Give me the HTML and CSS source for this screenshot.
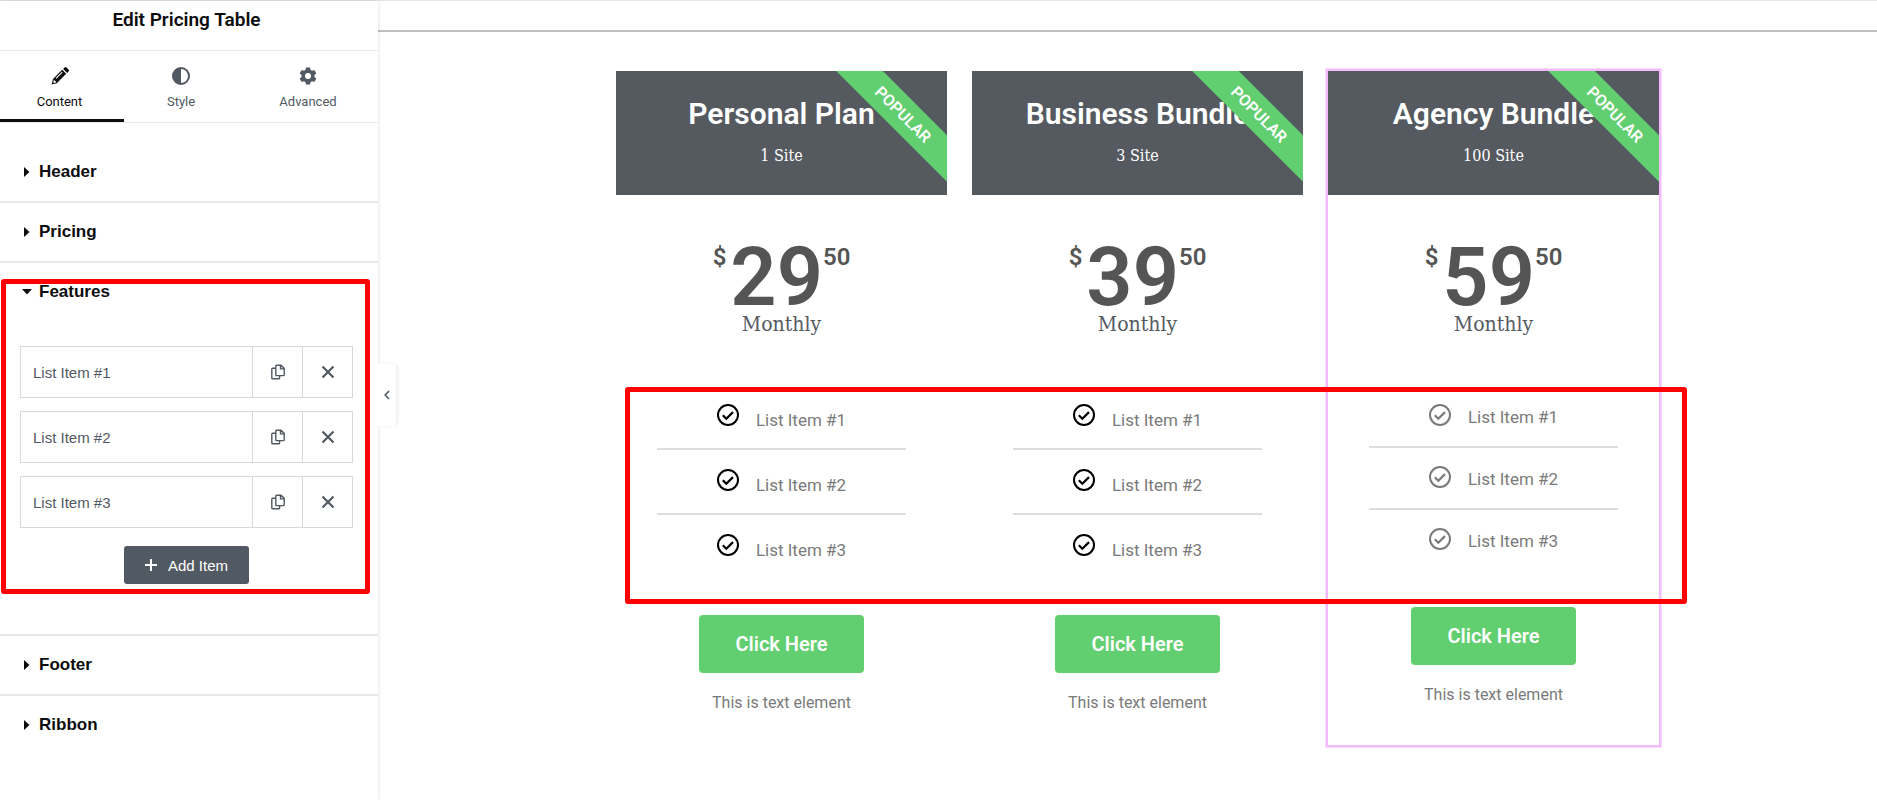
FILE: index.html
```html
<!DOCTYPE html>
<html lang="en">
<head>
<meta charset="utf-8">
<meta name="viewport" content="width=device-width, initial-scale=1">
<title>Edit Pricing Table</title>
<link rel="stylesheet" href="styles.css">
</head>
<body>
<svg class="sprite" aria-hidden="true">
  <symbol id="i-copy" viewBox="0 0 16 16"><path d="M6.600 1.200h4.400l3.200 3.200v6.400a.8.8 0 0 1-.8.8H6.600a.8.8 0 0 1-.8-.8V2a.8.8 0 0 1 .8-.8zM10.500 1.400v3.500h3.500M5.600 4.200H2.600a.8.8 0 0 0-.8.8v9a.8.8 0 0 0 .8.8h6.200a.8.8 0 0 0 .8-.8v-2.200" fill="none" stroke="currentColor" stroke-width="1.400"/></symbol>
  <symbol id="i-close" viewBox="0 0 14 14"><path d="M1.500 1.500l11 11M12.500 1.500l-11 11" fill="none" stroke="currentColor" stroke-width="2.200"/></symbol>
  <symbol id="i-check" viewBox="0 0 22 22"><circle cx="11" cy="11" r="10" fill="none" stroke="currentColor" stroke-width="2"/><path d="M5.800 11.200l3.500 3.500 6.700-6.600" fill="none" stroke="currentColor" stroke-width="2.200"/></symbol>
  <symbol id="i-caret" viewBox="0 0 6 10"><path d="M0 0l5.500 5L0 10z" fill="currentColor"/></symbol>
</svg>
<div class="editor">
  <aside class="panel">
    <h1 class="panel-title">Edit Pricing Table</h1>
    <nav class="tabs">
      <button class="tab tab-active" type="button">
        <svg class="tab-icon" viewBox="0 0 18 18" aria-hidden="true"><path fill="currentColor" fill-rule="evenodd" d="M11.200 2.800l4 4L5.800 16.200 0.600 17.600 2 12zM10.900 4.800L4.600 11.100l.7.7 6.300-6.300zM2.800 13.300l-.6 2.300.5.500 2.300-.6v-1.200H3.900v-1z"/><path fill="currentColor" d="M12.200 1.900l1.300-1.300a1.500 1.500 0 0 1 2.100 0l1.900 1.900a1.500 1.500 0 0 1 0 2.100l-1.300 1.300z"/></svg>
        <span>Content</span>
      </button>
      <button class="tab" type="button">
        <svg class="tab-icon" viewBox="0 0 18 18" aria-hidden="true"><circle cx="9" cy="9" r="8" fill="none" stroke="currentColor" stroke-width="2"/><path d="M9 1a8 8 0 0 0 0 16z" fill="currentColor"/></svg>
        <span>Style</span>
      </button>
      <button class="tab" type="button">
        <svg class="tab-icon" viewBox="0 0 18 18" aria-hidden="true"><path fill="currentColor" fill-rule="evenodd" d="M7 .4h4l.5 2.400 1.500.9 2.300-.8 2 3.400-1.800 1.700v2l1.800 1.700-2 3.400-2.300-.8-1.500.9-.5 2.400H7l-.5-2.400-1.500-.9-2.300.8-2-3.400L2.500 10V8L.7 6.300l2-3.400 2.300.8 1.500-.9zM9 6a3 3 0 1 0 0 6 3 3 0 0 0 0-6z"/></svg>
        <span>Advanced</span>
      </button>
    </nav>
    <div class="accordion">
      <section class="section"><button class="section-head" type="button" aria-expanded="false"><svg class="caret" aria-hidden="true"><use href="#i-caret"/></svg>Header</button></section>
      <section class="section"><button class="section-head" type="button" aria-expanded="false"><svg class="caret" aria-hidden="true"><use href="#i-caret"/></svg>Pricing</button></section>
      <section class="section">
        <button class="section-head" type="button" aria-expanded="true"><svg class="caret caret-open" aria-hidden="true"><use href="#i-caret"/></svg>Features</button>
        <div class="section-body">
          <ul class="repeater">
            <li class="row"><button class="row-title" type="button">List Item #1</button><button class="row-tool" type="button" aria-label="Duplicate"><svg class="copy"><use href="#i-copy"/></svg></button><button class="row-tool" type="button" aria-label="Remove"><svg class="close"><use href="#i-close"/></svg></button></li>
            <li class="row"><button class="row-title" type="button">List Item #2</button><button class="row-tool" type="button" aria-label="Duplicate"><svg class="copy"><use href="#i-copy"/></svg></button><button class="row-tool" type="button" aria-label="Remove"><svg class="close"><use href="#i-close"/></svg></button></li>
            <li class="row"><button class="row-title" type="button">List Item #3</button><button class="row-tool" type="button" aria-label="Duplicate"><svg class="copy"><use href="#i-copy"/></svg></button><button class="row-tool" type="button" aria-label="Remove"><svg class="close"><use href="#i-close"/></svg></button></li>
          </ul>
          <button class="add" type="button"><svg class="plus" viewBox="0 0 12 12" aria-hidden="true"><path d="M6 0v12M0 6h12" stroke="currentColor" stroke-width="2"/></svg>Add Item</button>
        </div>
        <div class="mark mark-panel"></div>
      </section>
      <section class="section"><button class="section-head" type="button" aria-expanded="false"><svg class="caret" aria-hidden="true"><use href="#i-caret"/></svg>Footer</button></section>
      <section class="section"><button class="section-head" type="button" aria-expanded="false"><svg class="caret" aria-hidden="true"><use href="#i-caret"/></svg>Ribbon</button></section>
    </div>
    <button class="collapse" type="button" aria-label="Hide panel"><svg viewBox="0 0 6 10" width="6" height="10"><path d="M5 1L1.200 5 5 9" fill="none" stroke="currentColor" stroke-width="1.600"/></svg></button>
  </aside>
  <main class="canvas">
    <div class="plans">
      <article class="plan">
        <header class="plan-head"><h2 class="plan-name">Personal Plan</h2><p class="plan-sub">1 Site</p><span class="ribbon">POPULAR</span></header>
        <div class="price"><span class="small">$</span><span class="amount">29</span><span class="small">50</span></div>
        <p class="period">Monthly</p>
        <ul class="features">
          <li class="feature"><svg class="check"><use href="#i-check"/></svg><span>List Item #1</span></li>
          <li class="feature"><svg class="check"><use href="#i-check"/></svg><span>List Item #2</span></li>
          <li class="feature"><svg class="check"><use href="#i-check"/></svg><span>List Item #3</span></li>
        </ul>
        <footer class="plan-foot"><a class="cta" href="#">Click Here</a><p class="note">This is text element</p></footer>
      </article>
      <article class="plan">
        <header class="plan-head"><h2 class="plan-name">Business Bundle</h2><p class="plan-sub">3 Site</p><span class="ribbon">POPULAR</span></header>
        <div class="price"><span class="small">$</span><span class="amount">39</span><span class="small">50</span></div>
        <p class="period">Monthly</p>
        <ul class="features">
          <li class="feature"><svg class="check"><use href="#i-check"/></svg><span>List Item #1</span></li>
          <li class="feature"><svg class="check"><use href="#i-check"/></svg><span>List Item #2</span></li>
          <li class="feature"><svg class="check"><use href="#i-check"/></svg><span>List Item #3</span></li>
        </ul>
        <footer class="plan-foot"><a class="cta" href="#">Click Here</a><p class="note">This is text element</p></footer>
      </article>
      <article class="plan plan-selected">
        <header class="plan-head"><h2 class="plan-name">Agency Bundle</h2><p class="plan-sub">100 Site</p><span class="ribbon">POPULAR</span></header>
        <div class="price"><span class="small">$</span><span class="amount">59</span><span class="small">50</span></div>
        <p class="period">Monthly</p>
        <ul class="features">
          <li class="feature"><svg class="check"><use href="#i-check"/></svg><span>List Item #1</span></li>
          <li class="feature"><svg class="check"><use href="#i-check"/></svg><span>List Item #2</span></li>
          <li class="feature"><svg class="check"><use href="#i-check"/></svg><span>List Item #3</span></li>
        </ul>
        <footer class="plan-foot"><a class="cta" href="#">Click Here</a><p class="note">This is text element</p></footer>
      </article>
      <div class="mark mark-plans"></div>
    </div>
  </main>
</div>
</body>
</html>
```
FILE: styles.css
```css
* { box-sizing: border-box; }
body { margin: 0; background: #fff; font-family: Roboto, "Liberation Sans", sans-serif; }
h1, h2, p, ul { margin: 0; padding: 0; }
ul { list-style: none; }
button { margin: 0; padding: 0; border: 0; background: none; font: inherit; color: inherit; cursor: pointer; }
svg { display: block; }
.sprite { position: absolute; width: 0; height: 0; }

.editor { display: flex; min-height: 100vh; border-top: 1px solid #e6e6e6; }

/* Panel */
.panel { position: relative; flex: 0 0 378px; box-shadow: 0 0 4px rgba(0, 0, 0, .14); color: #0c0d0e; }
.panel-title { padding: 0 5px 11px 0; border-bottom: 1px solid #e9eaeb; font-size: 19px; font-weight: 600; line-height: 38px; text-align: center; }
.tabs { display: grid; grid-template-columns: 124fr 114fr 140fr; border-bottom: 1px solid #e9eaeb; }
.tab { display: flex; flex-direction: column; align-items: center; gap: 7px; padding: 16px 0 7px; border-bottom: 3px solid transparent; color: #515962; font-size: 13px; line-height: 20px; }
.tab-active { padding-right: 5px; border-color: #0c0d0e; color: #0c0d0e; }
.tab-icon { width: 18px; height: 18px; }

.accordion { padding-top: 20px; font-family: "Liberation Sans", Arial, sans-serif; }
.section { position: relative; border-bottom: 2px solid #e6e8ea; }
.section:last-child { border-bottom: 0; }
.section-head { display: flex; align-items: center; gap: 9px; width: 100%; padding: 0 24px; font-size: 17px; font-weight: 700; line-height: 58px; }
.caret { width: 6px; height: 10px; overflow: visible; }
.caret-open { transform: rotate(90deg); }
.section-body { padding: 25px 25px 50px 20px; }
.repeater { display: grid; gap: 13px; }
.row { display: grid; grid-template-columns: 1fr 50px 50px; height: 52px; border: 1px solid #d5d8dc; color: #515962; }
.row-title { padding-left: 12px; font-size: 15px; text-align: left; }
.row-tool { display: grid; place-items: center; border-left: 1px solid #d5d8dc; }
.copy { width: 16px; height: 16px; }
.close { width: 14px; height: 14px; }
.add { display: flex; align-items: center; justify-content: center; gap: 11px; width: 125px; height: 38px; margin: 18px auto 0; border-radius: 3px; background: #515962; color: #fff; font-size: 15px; }
.plus { width: 12px; height: 12px; }
.collapse { position: absolute; left: 100%; top: 363px; display: grid; place-items: center; width: 18px; height: 62px; border-radius: 0 3px 3px 0; background: #fff; box-shadow: 2px 0 3px rgba(0, 0, 0, .07); color: #515962; }

/* Callout frames */
.mark { position: absolute; border: 5px solid #f00; border-radius: 3px; pointer-events: none; }
.mark-panel { top: 16px; right: 8px; bottom: 40px; left: 1px; }
.mark-plans { top: 316px; right: -28px; left: 9px; height: 217px; }

/* Canvas */
.canvas { flex: 1; margin-top: 29px; padding: 39px 20px 0 40px; border-top: 2px solid #bfbfbf; }
.plans { position: relative; display: grid; grid-template-columns: repeat(3, 1fr); gap: 25px; align-items: start; max-width: 1043px; margin: 0 auto; }
.plan { text-align: center; color: #7a7a7a; }
.plan-head { position: relative; overflow: hidden; padding: 22px 0 27px; background: #555960; color: #fff; }
.plan-name { font-size: 30px; font-weight: 600; line-height: 42px; white-space: nowrap; }
.plan-sub { margin-top: 9px; font-family: "Roboto Slab", "DejaVu Serif Condensed", "DejaVu Serif", serif; font-size: 16px; line-height: 24px; }
.ribbon { position: absolute; top: 27px; right: -56px; width: 200px; background: #61ce70; font-size: 16px; font-weight: 600; line-height: 33px; transform: rotate(45deg); }
.price { display: flex; justify-content: center; padding-top: 50px; color: #555; font-weight: 600; }
.small { font-size: 24px; line-height: 24px; }
.amount { margin-left: 4px; font-size: 81px; line-height: 66px; }
.period { color: #54595f; font-family: "Roboto Slab", "DejaVu Serif Condensed", "DejaVu Serif", serif; font-size: 21px; line-height: 26px; }
.features { margin: 48px auto 0; width: 75%; font-size: 17px; line-height: 24px; }
.feature { display: flex; justify-content: center; align-items: flex-start; gap: 17px; padding: 19px 0 16px; border-bottom: 2px solid #ddd; }
.feature:last-child { border-bottom: 0; }
.feature span { margin-top: 4px; }
.check { width: 22px; height: 22px; color: #000; }
.plan-foot { padding: 37px 0 38px; }
.cta { display: inline-block; padding: 17px 36px; border-radius: 4px; background: #61ce70; color: #fff; font-size: 20px; font-weight: 600; line-height: 24px; text-decoration: none; vertical-align: top; }
.note { margin-top: 18px; font-size: 16px; line-height: 24px; }

.plan-selected { box-shadow: 0 0 0 2px #f3bafd, 0 0 0 3px #f9dcfe; }
.plan-selected .features { margin-top: 49px; }
.plan-selected .feature { padding: 18px 0 17px; }
.plan-selected .feature span { margin-top: 1px; }
.plan-selected .check { color: #7a7a7a; }
```
